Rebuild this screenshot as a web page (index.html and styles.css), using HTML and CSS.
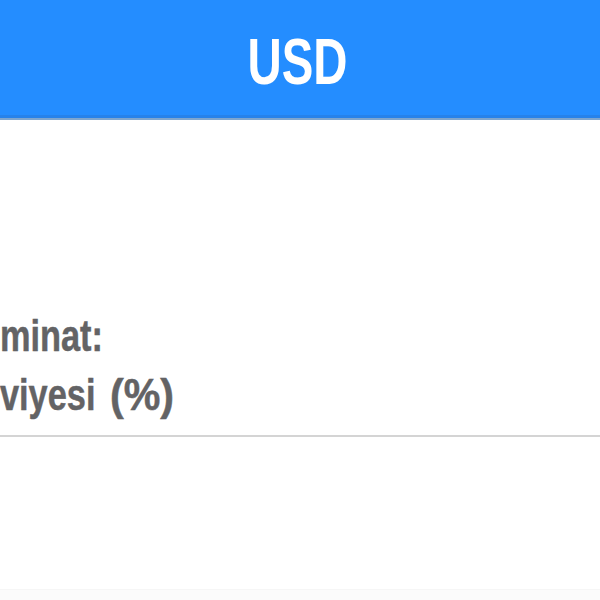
FILE: index.html
```
<!DOCTYPE html>
<html lang="tr">
<head>
  <meta charset="UTF-8">
  <meta name="viewport" content="width=device-width, initial-scale=1.0">
  <title>USD</title>
  <link rel="stylesheet" href="styles.css">
</head>
<body>
  <!-- Title bar -->
  <header class="topbar">
    <h1 class="topbar-title">USD</h1>
  </header>

  <!-- Form row -->
  <main class="content">
    <div class="field">
      <div class="field-label">
        <span class="label-line">minat:</span>
        <span class="label-line label-line--wide">viyesi <span class="unit">(%)</span></span>
      </div>
    </div>
  </main>

  <footer class="bottombar"></footer>
</body>
</html>
```

FILE: styles.css
```
/* General Reset */
body {
  margin: 0;
  padding: 0;
  width: 600px;
  height: 600px;
  overflow: hidden;
  display: flex;
  flex-direction: column;
  background-color: #ffffff;
  font-family: "Liberation Sans", Arial, sans-serif;
}

/* Title Bar */
.topbar {
  height: 115px;
  flex-shrink: 0;
  display: flex;
  justify-content: center;
  align-items: center;
  background-color: #248dff;
  border-bottom: 3px solid #2682ea;
  box-shadow: 0 2px 0 #7ea6cf;
}

.topbar-title {
  margin: 8px 0 0 -4px;
  color: #ffffff;
  font-size: 64px;
  font-weight: bold;
  line-height: 1;
  transform: scaleX(0.74);
}

/* Form Row */
.content {
  flex: 1;
  padding-top: 188px;
}

.field {
  border-bottom: 2px solid #d4d4d4;
  padding-bottom: 11px;
}

.field-label {
  display: flex;
  flex-direction: column;
  align-items: flex-start;
  color: #636365;
  font-size: 44px;
  font-weight: bold;
  line-height: 59px;
  -webkit-text-stroke: 0.5px #636365;
}

.label-line {
  transform: scaleX(0.78);
  transform-origin: left center;
}

.label-line--wide {
  word-spacing: 6px;
}

.unit {
  display: inline-block;
  transform: scaleX(1.2);
  transform-origin: left center;
}

/* Bottom Bar */
.bottombar {
  height: 10px;
  flex-shrink: 0;
  background-color: #fbfbfb;
  border-top: 1px solid #f6f6f6;
}
```
